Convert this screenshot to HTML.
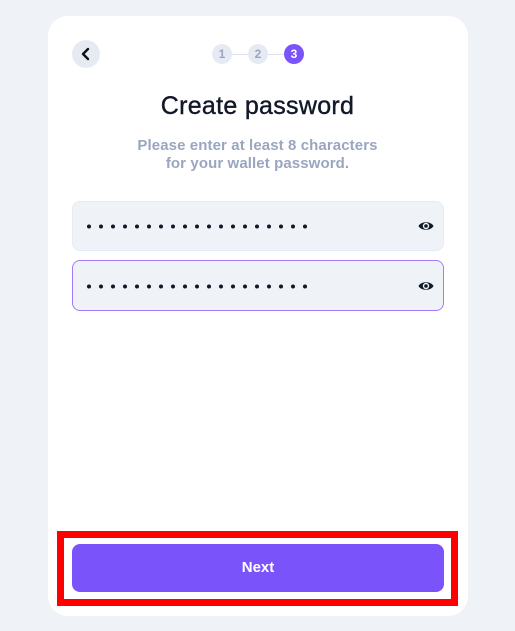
<!DOCTYPE html>
<html><head><style>
body{margin:0;width:515px;height:631px;background:#eff3f8;font-family:"Liberation Sans",sans-serif;position:relative;overflow:hidden}
.card{position:absolute;left:48px;top:16px;width:420px;height:600px;background:#fff;border-radius:20px}
.back{position:absolute;left:72px;top:40px;width:28px;height:28px;border-radius:50%;background:#e6ebf3}
.step{position:absolute;top:44px;width:20px;height:20px;border-radius:50%;background:#e6ebf3;color:#9aa6bf;font-size:12px;font-weight:bold;text-align:center;line-height:20px}
.line{position:absolute;top:53.5px;height:1px;background:#dde3ec;width:16px}
h1{position:absolute;top:92px;left:0;width:515px;margin:0;text-align:center;font-size:25px;font-weight:normal;color:#111827;line-height:28px;letter-spacing:0.3px;-webkit-text-stroke:0.4px #111827}
.sub{position:absolute;top:137px;left:0;width:515px;text-align:center;font-size:15px;font-weight:bold;color:#9aa6bf;line-height:18px;letter-spacing:0.1px}
.inp{position:absolute;left:72px;width:370px;height:48px;background:#eff3f8;border:1px solid #e6ebf3;border-radius:8px}
.inp.f{border-color:#a47bf5}
.dots{position:absolute;left:0;top:0}
.eye{position:absolute;left:345px;top:16px}
.red{position:absolute;left:57px;top:531px;width:387px;height:61px;border:7px solid #f00}
.btn{position:absolute;left:72px;top:544px;width:372px;height:48px;border-radius:8px;background:#7b53fa;color:#fff;font-weight:bold;font-size:15px;text-align:center;line-height:48px}
</style></head><body>
<div class="card"></div>
<div class="back"><svg width="28" height="28"><path d="M16 9 L11 14 L16 19" fill="none" stroke="#111" stroke-width="2.4" stroke-linecap="round" stroke-linejoin="round"/></svg></div>
<div class="step" style="left:212px">1</div>
<div class="line" style="left:232px"></div>
<div class="step" style="left:248px">2</div>
<div class="line" style="left:268px"></div>
<div class="step" style="left:284px;background:#7b53fa;color:#fff">3</div>
<h1>Create password</h1>
<div class="sub">Please enter at least 8 characters<br>for your wallet password.</div>
<div class="inp" style="top:201px"><svg class="dots" width="300" height="48"><g fill="#111827" id="d">
<circle cx="16" cy="24.5" r="2"/><circle cx="28" cy="24.5" r="2"/><circle cx="40" cy="24.5" r="2"/><circle cx="52" cy="24.5" r="2"/><circle cx="64" cy="24.5" r="2"/><circle cx="76" cy="24.5" r="2"/><circle cx="88" cy="24.5" r="2"/><circle cx="100" cy="24.5" r="2"/><circle cx="112" cy="24.5" r="2"/><circle cx="124" cy="24.5" r="2"/><circle cx="136" cy="24.5" r="2"/><circle cx="148" cy="24.5" r="2"/><circle cx="160" cy="24.5" r="2"/><circle cx="172" cy="24.5" r="2"/><circle cx="184" cy="24.5" r="2"/><circle cx="196" cy="24.5" r="2"/><circle cx="208" cy="24.5" r="2"/><circle cx="220" cy="24.5" r="2"/><circle cx="232" cy="24.5" r="2"/></g></svg><svg class="eye" width="16" height="16" viewBox="0 0 16 16"><path d="M0.5 8 C3 3 13 3 15.5 8 C13 13 3 13 0.5 8Z" fill="#111827"/><circle cx="8" cy="8" r="3.2" fill="#eff3f8"/><circle cx="8" cy="8" r="1.8" fill="#111827"/></svg></div>
<div class="inp f" style="top:260px;height:49px"><svg class="dots" width="300" height="49"><g fill="#111827">
<circle cx="16" cy="25.5" r="2"/><circle cx="28" cy="25.5" r="2"/><circle cx="40" cy="25.5" r="2"/><circle cx="52" cy="25.5" r="2"/><circle cx="64" cy="25.5" r="2"/><circle cx="76" cy="25.5" r="2"/><circle cx="88" cy="25.5" r="2"/><circle cx="100" cy="25.5" r="2"/><circle cx="112" cy="25.5" r="2"/><circle cx="124" cy="25.5" r="2"/><circle cx="136" cy="25.5" r="2"/><circle cx="148" cy="25.5" r="2"/><circle cx="160" cy="25.5" r="2"/><circle cx="172" cy="25.5" r="2"/><circle cx="184" cy="25.5" r="2"/><circle cx="196" cy="25.5" r="2"/><circle cx="208" cy="25.5" r="2"/><circle cx="220" cy="25.5" r="2"/><circle cx="232" cy="25.5" r="2"/></g></svg><svg class="eye" style="top:17px" width="16" height="16" viewBox="0 0 16 16"><path d="M0.5 8 C3 3 13 3 15.5 8 C13 13 3 13 0.5 8Z" fill="#111827"/><circle cx="8" cy="8" r="3.2" fill="#eff3f8"/><circle cx="8" cy="8" r="1.8" fill="#111827"/></svg></div>
<div class="red"></div>
<div class="btn">Next</div>
</body></html>
